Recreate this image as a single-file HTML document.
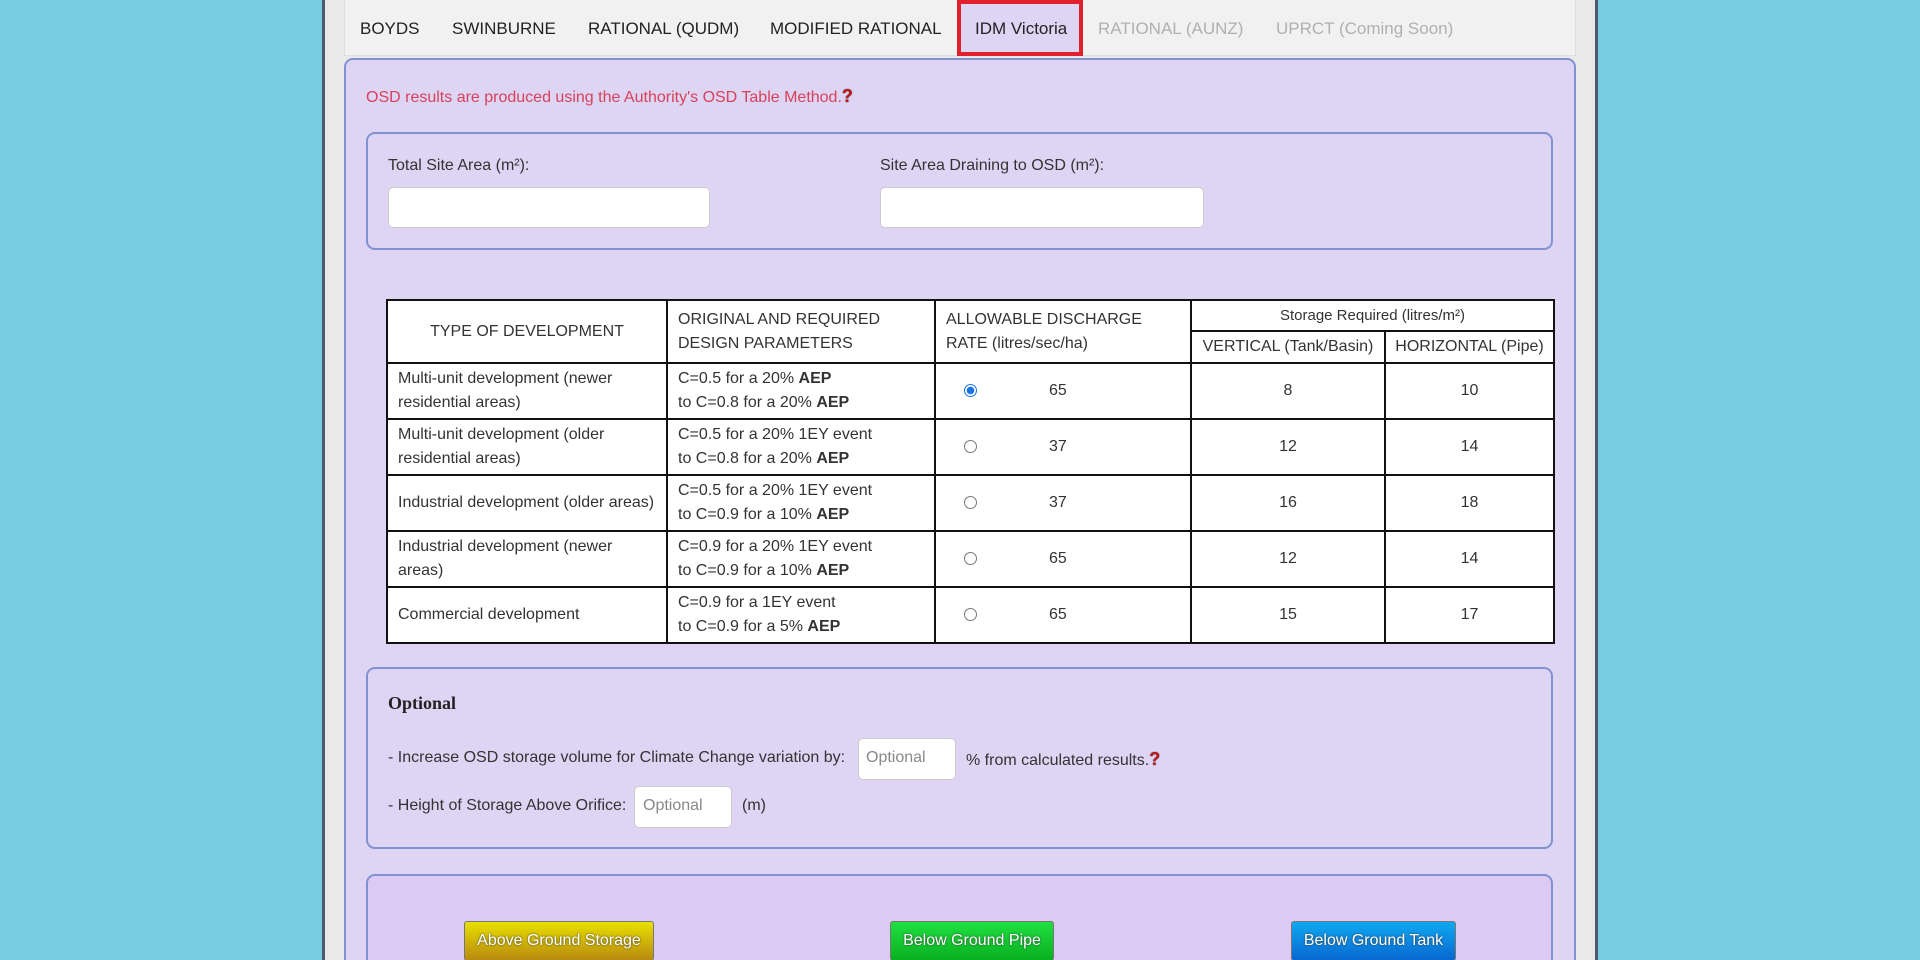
<!DOCTYPE html>
<html style="width:1920px;height:960px;overflow:hidden"><head><meta charset="utf-8"><style>
*{box-sizing:border-box;margin:0;padding:0}
body{width:1920px;height:960px;overflow:hidden;background:#78cde0;font-family:"Liberation Sans",Arial,sans-serif;font-size:16px;color:#333;position:relative}
.wrap{position:absolute;left:322px;top:0;width:1276px;height:960px;background:#e9e9e9;border:3px solid #4b5a6e;border-top:none;border-bottom:none}
.tabs{position:absolute;left:344px;top:0;width:1232px;height:56px;background:#f1f1f1;border:1px solid #ddd;border-top:none}
.tab{position:absolute;top:19px;font-size:17px;color:#222;white-space:nowrap}
.tab.dis{color:#b0b0b0}
.sel{position:absolute;left:957px;top:0;width:126px;height:56px;border:4px solid #e0202a;background:#ddd5f3}
.panel{position:absolute;left:344px;top:58px;width:1232px;height:920px;background:#ddd5f3;border:2px solid #8092d0;border-radius:9px}
.box{position:absolute;border:2px solid #8092d0;border-radius:9px;background:#ddd5f3}
.inp{position:absolute;background:#fff;border:1px solid #ccc;border-radius:5px}
.lbl{position:absolute;font-size:16px;color:#333;white-space:nowrap}
table{position:absolute;left:386px;top:299px;width:1167px;border-collapse:collapse;background:#fff;font-size:16px;color:#333;table-layout:fixed}
td{border:2px solid #111;padding:0 10px;line-height:24px;vertical-align:middle;white-space:nowrap;overflow:hidden}
.q{display:inline-block;color:#c01818;font-weight:bold;font-size:18px;text-shadow:0 0 1px #000}
.radio{display:inline-block;width:13px;height:13px;border:1px solid #777;border-radius:50%;vertical-align:middle;background:#fff}
.radio.on{border:1px solid #1a73e8;background:radial-gradient(circle,#1a73e8 0 3.5px,#fff 4px)}
.btn{position:absolute;top:921px;height:40px;border-radius:3px;color:#fff;font-size:16px;text-align:center;line-height:38px;border:1px solid #777;text-shadow:0 0 2px #333}
</style></head><body>
<div class="wrap"></div>
<div class="tabs"></div>
<div class="sel"></div>
<div class="tab" style="left:360px">BOYDS</div>
<div class="tab" style="left:452px">SWINBURNE</div>
<div class="tab" style="left:588px">RATIONAL (QUDM)</div>
<div class="tab" style="left:770px">MODIFIED RATIONAL</div>
<div class="tab" style="left:975px">IDM Victoria</div>
<div class="tab dis" style="left:1098px">RATIONAL (AUNZ)</div>
<div class="tab dis" style="left:1276px">UPRCT (Coming Soon)</div>

<div class="panel"></div>
<div class="lbl" style="left:366px;top:86px;color:#d9415a">OSD results are produced using the Authority's OSD Table Method.<span class="q">?</span></div>

<div class="box" style="left:366px;top:132px;width:1187px;height:118px"></div>
<div class="lbl" style="left:388px;top:157px">Total Site Area (m²):</div>
<div class="inp" style="left:388px;top:187px;width:322px;height:41px"></div>
<div class="lbl" style="left:880px;top:157px">Site Area Draining to OSD (m²):</div>
<div class="inp" style="left:880px;top:187px;width:324px;height:41px"></div>

<table>
<colgroup><col style="width:280px"><col style="width:268px"><col style="width:256px"><col style="width:194px"><col style="width:169px"></colgroup>
<tr style="height:31px"><td rowspan="2" style="text-align:center">TYPE OF DEVELOPMENT</td><td rowspan="2">ORIGINAL AND REQUIRED<br>DESIGN PARAMETERS</td><td rowspan="2">ALLOWABLE DISCHARGE<br>RATE (litres/sec/ha)</td><td colspan="2" style="text-align:center;font-size:15px;line-height:26px">Storage Required (litres/m²)</td></tr>
<tr style="height:32px"><td style="text-align:center;line-height:28px;padding:0 4px">VERTICAL (Tank/Basin)</td><td style="text-align:center;line-height:28px;padding:0 2px">HORIZONTAL (Pipe)</td></tr>
<tr style="height:56px"><td>Multi-unit development (newer<br>residential areas)</td><td>C=0.5 for a 20% <b>AEP</b><br>to C=0.8 for a 20% <b>AEP</b></td><td style="padding-left:28px"><span class="radio on"></span><span style="margin-left:72px">65</span></td><td style="text-align:center">8</td><td style="text-align:center">10</td></tr>
<tr style="height:56px"><td>Multi-unit development (older<br>residential areas)</td><td>C=0.5 for a 20% 1EY event<br>to C=0.8 for a 20% <b>AEP</b></td><td style="padding-left:28px"><span class="radio"></span><span style="margin-left:72px">37</span></td><td style="text-align:center">12</td><td style="text-align:center">14</td></tr>
<tr style="height:56px"><td>Industrial development (older areas)</td><td>C=0.5 for a 20% 1EY event<br>to C=0.9 for a 10% <b>AEP</b></td><td style="padding-left:28px"><span class="radio"></span><span style="margin-left:72px">37</span></td><td style="text-align:center">16</td><td style="text-align:center">18</td></tr>
<tr style="height:56px"><td>Industrial development (newer<br>areas)</td><td>C=0.9 for a 20% 1EY event<br>to C=0.9 for a 10% <b>AEP</b></td><td style="padding-left:28px"><span class="radio"></span><span style="margin-left:72px">65</span></td><td style="text-align:center">12</td><td style="text-align:center">14</td></tr>
<tr style="height:56px"><td>Commercial development</td><td>C=0.9 for a 1EY event<br>to C=0.9 for a 5% <b>AEP</b></td><td style="padding-left:28px"><span class="radio"></span><span style="margin-left:72px">65</span></td><td style="text-align:center">15</td><td style="text-align:center">17</td></tr>
</table>

<div class="box" style="left:366px;top:667px;width:1187px;height:182px"></div>
<div class="lbl" style="left:388px;top:693px;font-family:'Liberation Serif',serif;font-weight:bold;font-size:18px;color:#222">Optional</div>
<div class="lbl" style="left:388px;top:749px">- Increase OSD storage volume for Climate Change variation by:</div>
<div class="inp" style="left:858px;top:738px;width:98px;height:42px"></div>
<div class="lbl" style="left:866px;top:749px;color:#888">Optional</div>
<div class="lbl" style="left:966px;top:749px">% from calculated results.<span class="q">?</span></div>
<div class="lbl" style="left:388px;top:797px">- Height of Storage Above Orifice:</div>
<div class="inp" style="left:634px;top:786px;width:98px;height:42px"></div>
<div class="lbl" style="left:643px;top:797px;color:#888">Optional</div>
<div class="lbl" style="left:742px;top:797px">(m)</div>

<div class="box" style="left:366px;top:874px;width:1187px;height:120px;background:#dccaf3"></div>
<div class="btn" style="left:464px;width:190px;background:linear-gradient(#e8e000,#b88a10)">Above Ground Storage</div>
<div class="btn" style="left:890px;width:164px;background:linear-gradient(#20e040,#08b020)">Below Ground Pipe</div>
<div class="btn" style="left:1291px;width:165px;background:linear-gradient(#10a8f0,#0868d0)">Below Ground Tank</div>
</body></html>
